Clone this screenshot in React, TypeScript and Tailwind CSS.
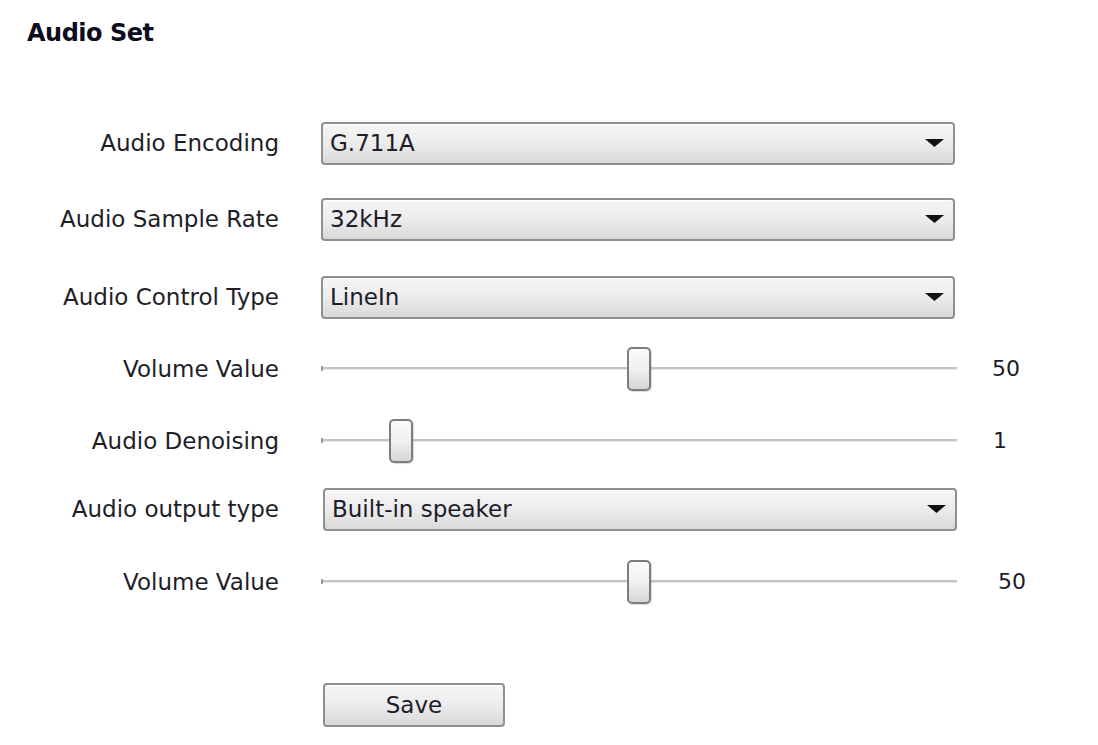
import React from 'react'

type Row =
  | { kind: 'select'; label: string; value: string; mt: string; wide?: boolean }
  | { kind: 'slider'; label: string; value: number; min: number; max: number; mt: string; valueClass: string }

const rows: Row[] = [
  { kind: 'select', label: 'Audio Encoding', value: 'G.711A', mt: 'mt-[76px]' },
  { kind: 'select', label: 'Audio Sample Rate', value: '32kHz', mt: 'mt-[32px]' },
  { kind: 'select', label: 'Audio Control Type', value: 'LineIn', mt: 'mt-[34px]' },
  { kind: 'slider', label: 'Volume Value', value: 50, min: 0, max: 100, mt: 'mt-[28px]', valueClass: 'ml-[35px]' },
  { kind: 'slider', label: 'Audio Denoising', value: 1, min: 0, max: 9, mt: 'mt-[28px]', valueClass: 'ml-[36px]' },
  { kind: 'select', label: 'Audio output type', value: 'Built-in speaker', mt: 'mt-[24px]', wide: true },
  { kind: 'slider', label: 'Volume Value', value: 50, min: 0, max: 100, mt: 'mt-[29px]', valueClass: 'ml-[41px]' },
]

const TRACK_W = 636
const THUMB_W = 24

const SelectBox = ({ value, wide }: { value: string; wide?: boolean }) => (
  <div
    className={`${wide ? 'ml-[44px] w-[634px]' : 'ml-[42px] w-[634px]'} h-[43px] flex items-center justify-between rounded-[4px] border-2 border-[#8f8f8f] bg-gradient-to-b from-[#f6f6f6] via-[#ececec] to-[#d9d9d9] pl-[7px] pr-[9px] shadow-[inset_0_1px_0_#ffffff]`}
  >
    <span className="text-[23px] text-[#1c1c2a] leading-none">{value}</span>
    <svg width="19" height="8" viewBox="0 0 19 8">
      <path d="M0 0 H19 L9.5 8 Z" fill="#111" />
    </svg>
  </div>
)

const Slider = ({ value, min, max, valueClass }: { value: number; min: number; max: number; valueClass: string }) => {
  const left = ((value - min) / (max - min)) * (TRACK_W - THUMB_W)
  return (
    <div className="ml-[42px] flex items-center">
      <div className="relative w-[636px] h-[44px]">
        <div className="absolute left-0 right-0 top-[20px] h-[3px] bg-[#c4c4c4] border-b border-[#e4e4e4]" />
        <div className="absolute left-0 top-[19px] h-[5px] w-[2px] bg-[#9a9a9a]" />
        <div
          className="absolute top-0 w-[24px] h-[44px] rounded-[5px] border-2 border-[#7d7d7d] bg-gradient-to-b from-[#fbfbfb] via-[#f0f0f0] to-[#d6d6d6] shadow-[1px_1px_1px_rgba(0,0,0,0.15)]"
          style={{ left }}
        />
      </div>
      <span className={`${valueClass} text-[22px] text-[#1c1c2a] leading-none`}>{value}</span>
    </div>
  )
}

export default function App() {
  return (
    <div className="w-[1098px] h-[745px] bg-white overflow-hidden font-['DejaVu_Sans',sans-serif] text-[#1e1e28]">
      <div className="pt-[21px] pl-[27px]">
        <h1 className="text-[24px] font-bold leading-[24px] text-[#0d0d20] tracking-[-0.5px]">Audio Set</h1>
      </div>
      <div className="flex flex-col">
        {rows.map((r, i) => (
          <div key={i} className={`${r.mt} flex items-center h-[44px]`}>
            <div className="w-[279px] text-right text-[23px] leading-none shrink-0">{r.label}</div>
            {r.kind === 'select' ? (
              <SelectBox value={r.value} wide={r.wide} />
            ) : (
              <Slider value={r.value} min={r.min} max={r.max} valueClass={r.valueClass} />
            )}
          </div>
        ))}
        <div className="mt-[79px] pl-[323px]">
          <button className="w-[182px] h-[44px] rounded-[4px] border-2 border-[#8f8f8f] bg-gradient-to-b from-[#f6f6f6] via-[#ececec] to-[#d9d9d9] text-[23px] text-[#1c1c2a] leading-none shadow-[inset_0_1px_0_#ffffff]">
            Save
          </button>
        </div>
      </div>
    </div>
  )
}
